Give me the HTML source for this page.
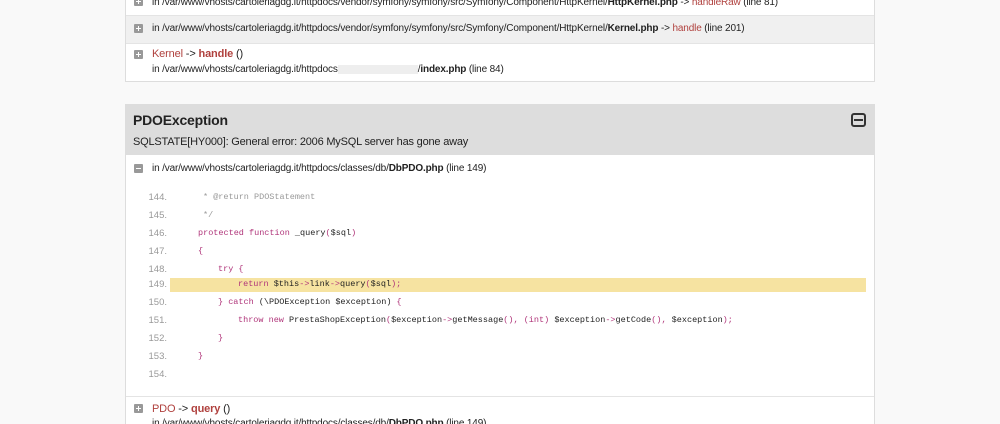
<!DOCTYPE html>
<html style="height:424px;overflow:hidden"><head><style>
body{margin:0;width:1000px;height:424px;background:#f9f9f9;font-family:"Liberation Sans",sans-serif;overflow:hidden;position:relative}
.box{position:absolute;left:125px;width:748px;background:#fff;border:1px solid #ddd}
.t{position:absolute;font-size:10px;letter-spacing:-0.15px;color:#222;white-space:nowrap}
.ic{position:absolute;width:9px;height:9px;background:#999;border-radius:1px}
.ic:before{content:"";position:absolute;left:2px;top:4px;width:5px;height:1px;background:#fff}
.ic.p:after{content:"";position:absolute;left:4px;top:2px;width:1px;height:5px;background:#fff}
.r{color:#b0413e}
b{color:#222}
.code{position:absolute;font-family:"Liberation Mono",monospace;font-size:8.5px;color:#222;white-space:pre}
.n{position:absolute;left:140px;width:27px;text-align:right;font-size:9.5px;color:#999}
.k{color:#b0357a}.c{color:#999}
</style></head><body>
<div class="box" style="top:-2px;height:82px"></div>
<div style="position:absolute;left:126px;top:15px;width:748px;height:27px;background:#f0f0f0;border-top:1px solid #e4e4e4;border-bottom:1px solid #e4e4e4"></div>
<div class="ic p" style="left:134px;top:-3px"></div>
<div class="t" style="left:152px;top:-3px">in /var/www/vhosts/cartoleriagdg.it/httpdocs/vendor/symfony/symfony/src/Symfony/Component/HttpKernel/<b>HttpKernel.php</b> -&gt; <span class="r">handleRaw</span> (line 81)</div>
<div class="ic p" style="left:134px;top:24px"></div>
<div class="t" style="left:152px;top:23px">in /var/www/vhosts/cartoleriagdg.it/httpdocs/vendor/symfony/symfony/src/Symfony/Component/HttpKernel/<b>Kernel.php</b> -&gt; <span class="r">handle</span> (line 201)</div>
<div class="ic p" style="left:134px;top:50px"></div>
<div class="t" style="left:152px;top:48px;font-size:11px"><span class="r">Kernel</span> -&gt; <b style="color:#b0413e">handle</b> ()</div>
<div class="t" style="left:152px;top:64px">in /var/www/vhosts/cartoleriagdg.it/httpdocs<span style="display:inline-block;width:80px;height:9px;background:#eee;vertical-align:middle"></span>/<b>index.php</b> (line 84)</div>

<div class="box" style="top:104px;height:330px"></div>
<div style="position:absolute;left:126px;top:104px;width:748px;height:51px;background:#ddd"></div>
<div class="t" style="left:133px;top:112px;font-size:14px;font-weight:bold;letter-spacing:-0.2px">PDOException</div>
<div class="t" style="left:133px;top:136px;font-size:11px;letter-spacing:-0.2px">SQLSTATE[HY000]: General error: 2006 MySQL server has gone away</div>
<div style="position:absolute;left:851px;top:113px;width:11px;height:10px;border:2px solid #333;border-radius:3px"></div>
<div style="position:absolute;left:854px;top:119px;width:9px;height:2px;background:#333"></div>
<div class="ic" style="left:134px;top:164px"></div>
<div class="t" style="left:152px;top:163px">in /var/www/vhosts/cartoleriagdg.it/httpdocs/classes/db/<b>DbPDO.php</b> (line 149)</div>

<div style="position:absolute;left:170px;top:278px;width:696px;height:14px;background:#f6e3a1"></div>
<div class="n" style="top:192px">144.</div><div class="code c" style="left:203px;top:192px">* @return PDOStatement</div>
<div class="n" style="top:210px">145.</div><div class="code c" style="left:203px;top:210px">*/</div>
<div class="n" style="top:228px">146.</div><div class="code" style="left:198px;top:228px"><span class="k">protected function</span> _query<span class="k">(</span>$sql<span class="k">)</span></div>
<div class="n" style="top:246px">147.</div><div class="code k" style="left:198px;top:246px">{</div>
<div class="n" style="top:264px">148.</div><div class="code k" style="left:218px;top:264px">try {</div>
<div class="n" style="top:279px">149.</div><div class="code" style="left:238px;top:279px"><span class="k">return</span> $this<span class="k">-&gt;</span>link<span class="k">-&gt;</span>query<span class="k">(</span>$sql<span class="k">);</span></div>
<div class="n" style="top:297px">150.</div><div class="code" style="left:218px;top:297px"><span class="k">} catch</span> (\PDOException $exception) <span class="k">{</span></div>
<div class="n" style="top:315px">151.</div><div class="code" style="left:238px;top:315px"><span class="k">throw new</span> PrestaShopException<span class="k">(</span>$exception<span class="k">-&gt;</span>getMessage<span class="k">(), (int)</span> $exception<span class="k">-&gt;</span>getCode<span class="k">(),</span> $exception<span class="k">);</span></div>
<div class="n" style="top:333px">152.</div><div class="code k" style="left:218px;top:333px">}</div>
<div class="n" style="top:351px">153.</div><div class="code k" style="left:198px;top:351px">}</div>
<div class="n" style="top:369px">154.</div>

<div style="position:absolute;left:126px;top:396px;width:748px;height:1px;background:#e4e4e4"></div>
<div class="ic p" style="left:134px;top:404px"></div>
<div class="t" style="left:152px;top:403px;font-size:11px"><span class="r">PDO</span> -&gt; <b style="color:#b0413e">query</b> ()</div>
<div class="t" style="left:152px;top:418px">in /var/www/vhosts/cartoleriagdg.it/httpdocs/classes/db/<b>DbPDO.php</b> (line 149)</div>
</body></html>
